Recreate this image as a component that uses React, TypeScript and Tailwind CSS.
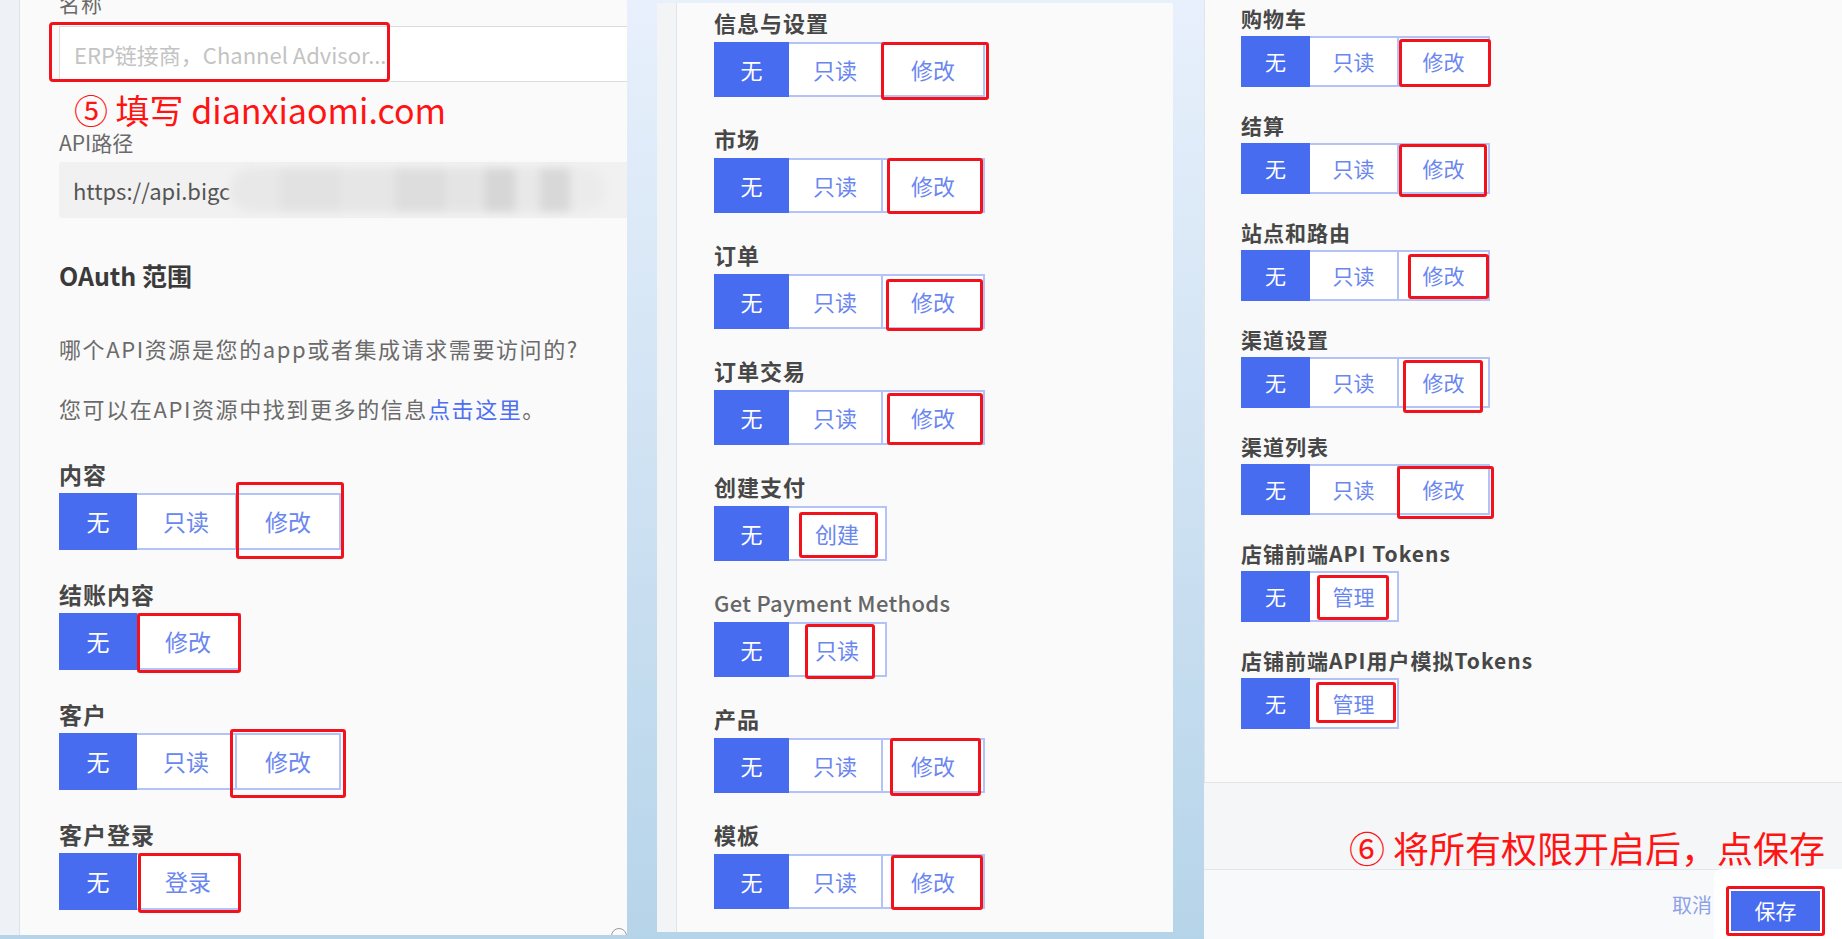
import React from "react";

type Row = { label: string; opts: string[]; red: string; latin?: boolean };

type PanelStyle = {
  seg3: string[];
  seg2: string[];
  groupH: string;
  btnText: string;
  label: string;
  gap: string;
  rowMb: string;
};

const p1: PanelStyle = {
  seg3: ["w-[78px]", "w-[100px]", "w-[104px]"],
  seg2: ["w-[78px]", "w-[104px]"],
  groupH: "h-[57px]",
  btnText: "text-[23px]",
  label: "h-[24px] text-[23px] leading-[24px]",
  gap: "mt-[7px]",
  rowMb: "mb-[32px]",
};

const p2: PanelStyle = {
  seg3: ["w-[75px]", "w-[94px]", "w-[102px]"],
  seg2: ["w-[75px]", "w-[98px]"],
  groupH: "h-[55px]",
  btnText: "text-[22px]",
  label: "h-[22px] text-[22px] leading-[22px]",
  gap: "mt-[9px]",
  rowMb: "mb-[30px]",
};

const p3: PanelStyle = {
  seg3: ["w-[69px]", "w-[89px]", "w-[91px]"],
  seg2: ["w-[69px]", "w-[89px]"],
  groupH: "h-[51px]",
  btnText: "text-[21px]",
  label: "h-[22px] text-[21px] leading-[22px]",
  gap: "mt-[7px]",
  rowMb: "mb-[27px]",
};

const rows1: Row[] = [
  { label: "内容", opts: ["无", "只读", "修改"], red: "left-[177px] top-[-11px] w-[108px] h-[77px]" },
  { label: "结账内容", opts: ["无", "修改"], red: "left-[78px] top-[0px] w-[104px] h-[60px]" },
  { label: "客户", opts: ["无", "只读", "修改"], red: "left-[171px] top-[-4px] w-[116px] h-[69px]" },
  { label: "客户登录", opts: ["无", "登录"], red: "left-[79px] top-[0px] w-[103px] h-[60px]" },
];

const rows2: Row[] = [
  { label: "信息与设置", opts: ["无", "只读", "修改"], red: "left-[167px] top-[0px] w-[108px] h-[58px]" },
  { label: "市场", opts: ["无", "只读", "修改"], red: "left-[173px] top-[0px] w-[96px] h-[56px]" },
  { label: "订单", opts: ["无", "只读", "修改"], red: "left-[172px] top-[5px] w-[97px] h-[52px]" },
  { label: "订单交易", opts: ["无", "只读", "修改"], red: "left-[173px] top-[3px] w-[96px] h-[52px]" },
  { label: "创建支付", opts: ["无", "创建"], red: "left-[85px] top-[6px] w-[79px] h-[46px]" },
  { label: "Get Payment Methods", opts: ["无", "只读"], red: "left-[91px] top-[2px] w-[70px] h-[55px]", latin: true },
  { label: "产品", opts: ["无", "只读", "修改"], red: "left-[176px] top-[0px] w-[91px] h-[58px]" },
  { label: "模板", opts: ["无", "只读", "修改"], red: "left-[177px] top-[1px] w-[92px] h-[55px]" },
];

const rows3: Row[] = [
  { label: "购物车", opts: ["无", "只读", "修改"], red: "left-[158px] top-[3px] w-[92px] h-[48px]" },
  { label: "结算", opts: ["无", "只读", "修改"], red: "left-[158px] top-[1px] w-[88px] h-[53px]" },
  { label: "站点和路由", opts: ["无", "只读", "修改"], red: "left-[167px] top-[4px] w-[81px] h-[45px]" },
  { label: "渠道设置", opts: ["无", "只读", "修改"], red: "left-[162px] top-[3px] w-[80px] h-[53px]" },
  { label: "渠道列表", opts: ["无", "只读", "修改"], red: "left-[156px] top-[2px] w-[97px] h-[53px]" },
  { label: "店铺前端API Tokens", opts: ["无", "管理"], red: "left-[76px] top-[4px] w-[72px] h-[45px]" },
  { label: "店铺前端API用户模拟Tokens", opts: ["无", "管理"], red: "left-[75px] top-[4px] w-[80px] h-[41px]" },
];

const ScopeRow: React.FC<{ row: Row; s: PanelStyle }> = ({ row, s }) => {
  const widths = row.opts.length === 3 ? s.seg3 : s.seg2;
  return (
    <div className={s.rowMb}>
      <div
        className={`${s.label} whitespace-nowrap ${
          row.latin ? "font-medium text-[#666] tracking-[0.3px]" : "font-bold text-[#474747] tracking-[1px]"
        }`}
      >
        {row.label}
      </div>
      <div className={`relative flex w-fit ${s.gap} ${s.groupH} ${s.btnText}`}>
        {row.opts.map((o, i) => (
          <div
            key={o}
            className={`${widths[i]} flex items-center justify-center ${
              i === 0
                ? "bg-[#486cf0] text-white"
                : "border-y-2 border-r-2 border-[#b3c2f7] bg-white text-[#6a86ef]"
            }`}
          >
            {o}
          </div>
        ))}
        <div className={`pointer-events-none absolute rounded-[3px] border-[3px] border-[#f2121c] ${row.red}`} />
      </div>
    </div>
  );
};

export default function App() {
  return (
    <div className="flex h-[939px] w-[1842px] overflow-hidden bg-linear-to-b from-[#e8f0fc] to-[#b6d4e9] font-['Noto_Sans_CJK_SC','Noto_Sans',sans-serif]">
      {/* panel 1 */}
      <div className="relative flex h-[935px] w-[627px] shrink-0 bg-[#fafafa]">
        <div className="w-[20px] border-r border-[#dfe3e8] bg-[#eef2f7]" />
        <div className="relative flex-1 overflow-hidden pl-[39px]">
          <div className="mt-[-7px] h-[20px] text-[21px] leading-[20px] text-[#6a6a6a] tracking-[1px]">名称</div>
          <div className="relative mt-[13px] flex h-[56px] items-center border-y border-l border-[#dcdcdc] bg-white pl-[14px] text-[22px] text-[#c3c3c3]">
            ERP链接商，Channel Advisor...
            <div className="pointer-events-none absolute left-[-11px] top-[-5px] h-[60px] w-[341px] rounded-[4px] border-[3px] border-[#f2121c]" />
          </div>
          <div className="mt-[10px] h-[36px] whitespace-nowrap pl-[15px] text-[34px] leading-[36px] text-[#ff1414]">
            ⑤ 填写 dianxiaomi.com
          </div>
          <div className="mt-[4px] h-[20px] text-[21px] leading-[20px] text-[#6a6a6a]">API路径</div>
          <div className="mt-[10px] flex h-[56px] items-center rounded-l-[3px] bg-[#f1f1f1] pl-[14px] text-[22px] text-[#555]">
            <span>https://api.bigc</span>
            <div className="flex h-[44px] w-[375px] items-stretch overflow-hidden rounded-[22px] blur-[4px]">
              <div className="w-[50px] bg-[#e8e8e8]" />
              <div className="w-[60px] bg-[#e2e2e2]" />
              <div className="w-[55px] bg-[#e6e6e6]" />
              <div className="w-[50px] bg-[#dddddd]" />
              <div className="w-[40px] bg-[#e4e4e4]" />
              <div className="w-[30px] bg-[#d6d6d6]" />
              <div className="w-[25px] bg-[#e8e8e8]" />
              <div className="w-[30px] bg-[#d8d8d8]" />
              <div className="w-[35px] bg-[#ebebeb]" />
            </div>
          </div>
          <div className="mt-[42px] h-[30px] text-[25px] font-bold leading-[30px] text-[#3a3a3a]">OAuth 范围</div>
          <div className="mt-[46px] h-[24px] whitespace-nowrap text-[22px] leading-[24px] tracking-[1.6px] text-[#6b6b6b]">
            哪个API资源是您的app或者集成请求需要访问的?
          </div>
          <div className="mt-[36px] h-[24px] whitespace-nowrap text-[22px] leading-[24px] tracking-[1.6px] text-[#6b6b6b]">
            您可以在API资源中找到更多的信息<span className="text-[#4d6ff0]">点击这里</span>。
          </div>
          <div className="mt-[42px]">
            {rows1.map((r) => (
              <ScopeRow key={r.label} row={r} s={p1} />
            ))}
          </div>
          <div className="absolute bottom-[-9px] right-[0px] h-[16px] w-[16px] rounded-full border border-[#9a9a9a]" />
        </div>
      </div>

      <div className="w-[30px] shrink-0" />

      {/* panel 2 */}
      <div className="mt-[3px] flex h-[929px] w-[516px] shrink-0">
        <div className="w-[20px] border-r border-[#e1e4e8] bg-[#f3f4f6]" />
        <div className="flex-1 overflow-hidden bg-[#fafafa] pl-[37px] pt-[8px]">
          {rows2.map((r) => (
            <ScopeRow key={r.label} row={r} s={p2} />
          ))}
        </div>
      </div>

      <div className="w-[31px] shrink-0" />

      {/* panel 3 */}
      <div className="relative flex h-[939px] flex-1 flex-col">
        <div className="h-[783px] overflow-hidden border-b border-l border-[#e1e4e8] bg-[#fafafa] pl-[36px] pt-[7px]">
          {rows3.map((r) => (
            <ScopeRow key={r.label} row={r} s={p3} />
          ))}
        </div>
        <div className="h-[86px] bg-[#f5f6f8]" />
        <div className="relative flex h-[70px] items-center justify-end border-t border-[#e3e5e8] bg-[#f8f9fb]">
          <span className="mr-[2px] text-[20px] text-[#8ea2e4]">取消</span>
          <div className="flex h-[72px] w-[128px] items-start rounded-tl-[8px] bg-white pl-[12px] pt-[17px]">
            <div className="flex h-[50px] w-[99px] items-center justify-center rounded-[3px] border-[3px] border-[#f2121c] p-[2px]">
              <div className="flex h-full w-full items-center justify-center bg-[#486cf0] text-[21px] text-white">保存</div>
            </div>
          </div>
        </div>
        <div className="absolute left-[145px] top-[823px] whitespace-nowrap text-[36px] leading-[48px] text-[#ff1414]">
          ⑥ 将所有权限开启后，点保存
        </div>
      </div>
    </div>
  );
}
